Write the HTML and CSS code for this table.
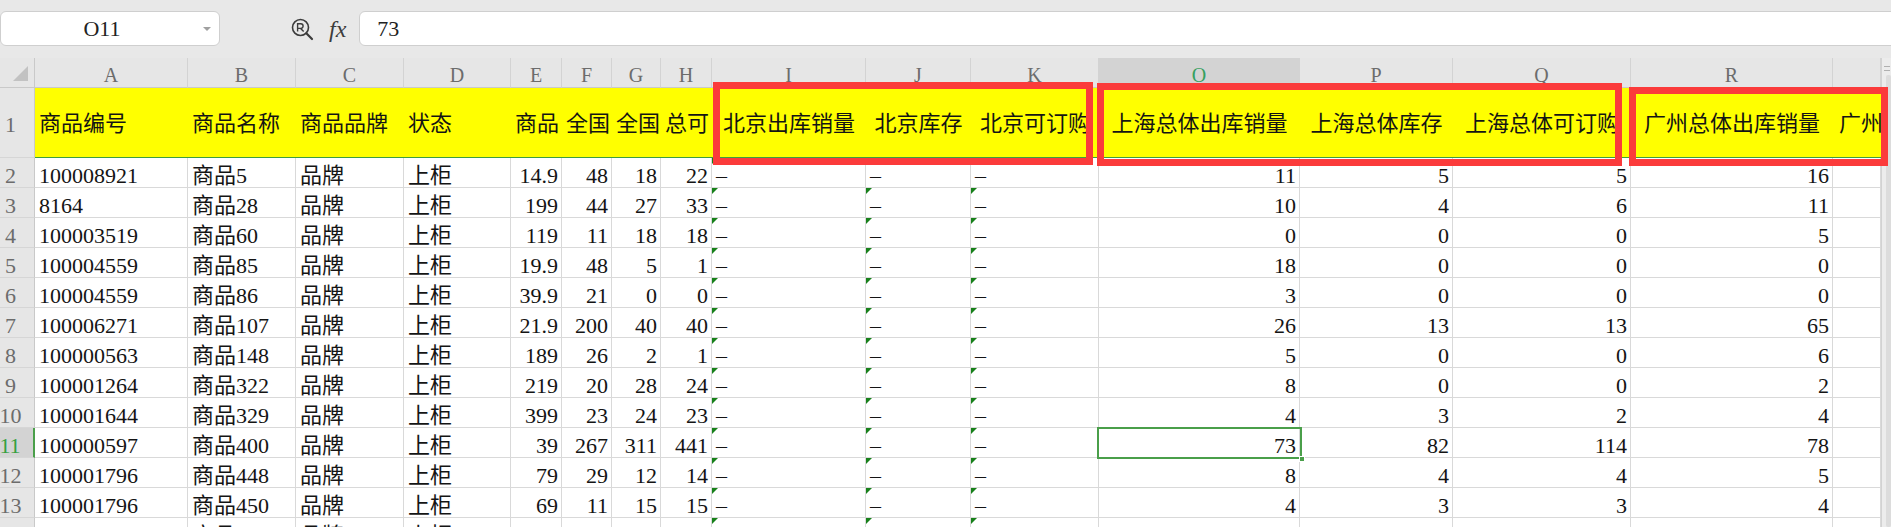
FILE: index.html
```html
<!DOCTYPE html>
<html lang="zh">
<head>
<meta charset="utf-8">
<title>Sheet</title>
<link rel="stylesheet" href="styles.css">
</head>
<body>
<div class="toolbar">
  <div class="namebox"><span class="namebox-text">O11</span><span class="dropdown"></span></div>
  <div class="tools">
    <svg class="lens" width="24" height="24" viewBox="0 0 24 24">
      <circle cx="10.5" cy="10.5" r="8" fill="none" stroke="#3c3c3c" stroke-width="1.6"/>
      <path d="M16.3 16.3 L22 22" stroke="#3c3c3c" stroke-width="2.2" stroke-linecap="round"/>
      <path d="M7.6 14.6 V6.8 H10.8 a2.3 2.3 0 0 1 0 4.6 H7.6 M10.6 11.4 L13.7 14.6" fill="none" stroke="#3c3c3c" stroke-width="1.4"/>
    </svg>
    <span class="fx">fx</span>
  </div>
  <div class="formula">73</div>
</div>
<div class="sheet">
  <div class="grid">
    <div class="corner"></div>
    <div class="ch">A</div><div class="ch">B</div><div class="ch">C</div><div class="ch">D</div><div class="ch">E</div><div class="ch">F</div><div class="ch">G</div><div class="ch">H</div><div class="ch">I</div><div class="ch">J</div><div class="ch">K</div><div class="ch sel">O</div><div class="ch">P</div><div class="ch">Q</div><div class="ch">R</div><div class="ch"></div>

    <div class="rh top">1</div>
    <div class="y">商品编号</div><div class="y">商品名称</div><div class="y">商品品牌</div><div class="y">状态</div><div class="y n">商品</div><div class="y n">全国</div><div class="y n">全国</div><div class="y n">总可</div><div class="y m">北京出库销量</div><div class="y m">北京库存</div><div class="y m">北京可订购</div><div class="y m">上海总体出库销量</div><div class="y m">上海总体库存</div><div class="y m">上海总体可订购</div><div class="y m">广州总体出库销量</div><div class="y s">广州</div>

    <div class="rh">2</div><div class="c">100008921</div><div class="c">商品5</div><div class="c">品牌</div><div class="c">上柜</div><div class="c r">14.9</div><div class="c r">48</div><div class="c r">18</div><div class="c r">22</div><div class="c e">–</div><div class="c e">–</div><div class="c e">–</div><div class="c r">11</div><div class="c r">5</div><div class="c r">5</div><div class="c r">16</div><div class="c"></div>
    <div class="rh">3</div><div class="c">8164</div><div class="c">商品28</div><div class="c">品牌</div><div class="c">上柜</div><div class="c r">199</div><div class="c r">44</div><div class="c r">27</div><div class="c r">33</div><div class="c e">–</div><div class="c e">–</div><div class="c e">–</div><div class="c r">10</div><div class="c r">4</div><div class="c r">6</div><div class="c r">11</div><div class="c"></div>
    <div class="rh">4</div><div class="c">100003519</div><div class="c">商品60</div><div class="c">品牌</div><div class="c">上柜</div><div class="c r">119</div><div class="c r">11</div><div class="c r">18</div><div class="c r">18</div><div class="c e">–</div><div class="c e">–</div><div class="c e">–</div><div class="c r">0</div><div class="c r">0</div><div class="c r">0</div><div class="c r">5</div><div class="c"></div>
    <div class="rh">5</div><div class="c">100004559</div><div class="c">商品85</div><div class="c">品牌</div><div class="c">上柜</div><div class="c r">19.9</div><div class="c r">48</div><div class="c r">5</div><div class="c r">1</div><div class="c e">–</div><div class="c e">–</div><div class="c e">–</div><div class="c r">18</div><div class="c r">0</div><div class="c r">0</div><div class="c r">0</div><div class="c"></div>
    <div class="rh">6</div><div class="c">100004559</div><div class="c">商品86</div><div class="c">品牌</div><div class="c">上柜</div><div class="c r">39.9</div><div class="c r">21</div><div class="c r">0</div><div class="c r">0</div><div class="c e">–</div><div class="c e">–</div><div class="c e">–</div><div class="c r">3</div><div class="c r">0</div><div class="c r">0</div><div class="c r">0</div><div class="c"></div>
    <div class="rh">7</div><div class="c">100006271</div><div class="c">商品107</div><div class="c">品牌</div><div class="c">上柜</div><div class="c r">21.9</div><div class="c r">200</div><div class="c r">40</div><div class="c r">40</div><div class="c e">–</div><div class="c e">–</div><div class="c e">–</div><div class="c r">26</div><div class="c r">13</div><div class="c r">13</div><div class="c r">65</div><div class="c"></div>
    <div class="rh">8</div><div class="c">100000563</div><div class="c">商品148</div><div class="c">品牌</div><div class="c">上柜</div><div class="c r">189</div><div class="c r">26</div><div class="c r">2</div><div class="c r">1</div><div class="c e">–</div><div class="c e">–</div><div class="c e">–</div><div class="c r">5</div><div class="c r">0</div><div class="c r">0</div><div class="c r">6</div><div class="c"></div>
    <div class="rh">9</div><div class="c">100001264</div><div class="c">商品322</div><div class="c">品牌</div><div class="c">上柜</div><div class="c r">219</div><div class="c r">20</div><div class="c r">28</div><div class="c r">24</div><div class="c e">–</div><div class="c e">–</div><div class="c e">–</div><div class="c r">8</div><div class="c r">0</div><div class="c r">0</div><div class="c r">2</div><div class="c"></div>
    <div class="rh">10</div><div class="c">100001644</div><div class="c">商品329</div><div class="c">品牌</div><div class="c">上柜</div><div class="c r">399</div><div class="c r">23</div><div class="c r">24</div><div class="c r">23</div><div class="c e">–</div><div class="c e">–</div><div class="c e">–</div><div class="c r">4</div><div class="c r">3</div><div class="c r">2</div><div class="c r">4</div><div class="c"></div>
    <div class="rh sel">11</div><div class="c">100000597</div><div class="c">商品400</div><div class="c">品牌</div><div class="c">上柜</div><div class="c r">39</div><div class="c r">267</div><div class="c r">311</div><div class="c r">441</div><div class="c e">–</div><div class="c e">–</div><div class="c e">–</div><div class="c r">73</div><div class="c r">82</div><div class="c r">114</div><div class="c r">78</div><div class="c"></div>
    <div class="rh">12</div><div class="c">100001796</div><div class="c">商品448</div><div class="c">品牌</div><div class="c">上柜</div><div class="c r">79</div><div class="c r">29</div><div class="c r">12</div><div class="c r">14</div><div class="c e">–</div><div class="c e">–</div><div class="c e">–</div><div class="c r">8</div><div class="c r">4</div><div class="c r">4</div><div class="c r">5</div><div class="c"></div>
    <div class="rh">13</div><div class="c">100001796</div><div class="c">商品450</div><div class="c">品牌</div><div class="c">上柜</div><div class="c r">69</div><div class="c r">11</div><div class="c r">15</div><div class="c r">15</div><div class="c e">–</div><div class="c e">–</div><div class="c e">–</div><div class="c r">4</div><div class="c r">3</div><div class="c r">3</div><div class="c r">4</div><div class="c"></div>
    <div class="rh">14</div><div class="c">100002318</div><div class="c">商品461</div><div class="c">品牌</div><div class="c">上柜</div><div class="c r">59</div><div class="c r">30</div><div class="c r">8</div><div class="c r">9</div><div class="c e">–</div><div class="c e">–</div><div class="c e">–</div><div class="c r">2</div><div class="c r">1</div><div class="c r">1</div><div class="c r">3</div><div class="c"></div>
  </div>
  <div class="vscroll"><div class="vs-grip"></div><div class="vs-thumb"></div></div>
</div>

<div class="selection"><span class="handle"></span></div>
<div class="redbox box1"></div>
<div class="redbox box2"></div>
<div class="redbox box3"></div>
</body>
</html>
```
FILE: styles.css
```css
* { box-sizing: border-box; margin: 0; padding: 0; }
html, body { width: 1891px; height: 527px; overflow: hidden; background: #fff; }
body {
  position: relative;
  font-family: "Liberation Serif", "Noto Sans CJK SC", serif;
  font-size: 22px;
  color: #141414;
}

/* ---------- formula bar ---------- */
.toolbar {
  height: 58px;
  background: #e8e8e8;
  display: flex;
  align-items: flex-start;
  padding-top: 11px;
}
.namebox {
  width: 220px;
  height: 35px;
  background: #fff;
  border: 1px solid #cfcfcf;
  border-radius: 6px;
  display: flex;
  align-items: center;
}
.namebox-text {
  width: 202px;
  text-align: center;
  line-height: 33px;
  color: #222;
}
.dropdown {
  width: 0;
  height: 0;
  border-left: 4px solid transparent;
  border-right: 4px solid transparent;
  border-top: 4px solid #a0a0a0;
}
.tools {
  display: flex;
  align-items: center;
  gap: 15px;
  height: 35px;
  margin-left: 70px;
  margin-right: 13px;
}
.lens { display: block; }
.fx {
  font-family: "Liberation Serif", serif;
  font-style: italic;
  font-size: 24px;
  color: #3c3c3c;
  line-height: 24px;
}
.formula {
  flex: 1;
  height: 35px;
  margin-right: -12px;
  background: #fff;
  border: 1px solid #cfcfcf;
  border-radius: 6px;
  padding-left: 17px;
  line-height: 33px;
  color: #222;
}

/* ---------- sheet ---------- */
.sheet {
  display: flex;
  height: 469px;
}
.grid {
  width: 1881px;
  display: grid;
  grid-template-columns: 35px 153px 108px 108px 107px 51px 50px 49px 51px 154px 105px 128px 201px 153px 178px 202px 48px;
  grid-template-rows: 30px 70px repeat(13, 30px);
  overflow: hidden;
}
.corner {
  position: relative;
  background: #e6e6e6;
  border-right: 1px solid #c9c9c9;
  border-bottom: 1px solid #c9c9c9;
}
.corner::after {
  content: "";
  position: absolute;
  right: 6px;
  bottom: 6px;
  border-left: 15px solid transparent;
  border-bottom: 15px solid #c2c2c2;
}
.ch {
  background: #e6e6e6;
  border-right: 1px solid #d3d3d3;
  border-bottom: 1px solid #c9c9c9;
  color: #6c6c6c;
  font-size: 20px;
  line-height: 22px;
  display: flex;
  align-items: flex-end;
  justify-content: center;
  padding-bottom: 1px;
}
.ch.sel {
  background: #d3d3d3;
  color: #36a060;
}
.rh {
  background: #e6e6e6;
  border-right: 1px solid #c9c9c9;
  border-bottom: 1px solid #d6d6d6;
  color: #6c6c6c;
  line-height: 22px;
  display: flex;
  align-items: flex-end;
  justify-content: center;
  padding-right: 13px;
}
.rh.top { align-items: center; padding-top: 4px; }
.rh.sel {
  background: #d3d3d3;
  color: #36a040;
  border-right: 2px solid #4a9f4a;
}

.y {
  background: #ffff00;
  border-bottom: 1px solid #3e9e3e;
  display: flex;
  align-items: center;
  padding: 3px 0 0 4px;
  white-space: nowrap;
  overflow: hidden;
  line-height: 24px;
}
.y.n { padding-left: 4px; }
.y.m { justify-content: center; padding-left: 0; }
.y.s { padding-left: 6px; }

.c {
  position: relative;
  border-right: 1px solid #d9d9d9;
  border-bottom: 1px solid #d9d9d9;
  display: flex;
  align-items: flex-end;
  padding: 0 4px;
  line-height: 22px;
  white-space: nowrap;
  overflow: hidden;
}
.c.r { justify-content: flex-end; padding-right: 3px; }
.c.e::before {
  content: "";
  position: absolute;
  top: 0;
  left: 0;
  border-top: 6px solid #17801a;
  border-right: 6px solid transparent;
}

/* ---------- scrollbar ---------- */
.vscroll {
  width: 10px;
  background: #ececec;
  border-left: 1px solid #d2d2d2;
  padding-top: 8px;
  display: flex;
  flex-direction: column;
  align-items: flex-end;
}
.vs-grip {
  width: 6px;
  height: 5px;
  margin-right: 1px;
  border-top: 1px solid #b0b0b0;
  border-bottom: 1px solid #b0b0b0;
}
.vs-thumb {
  width: 5px;
  flex: 1;
  margin-top: 4px;
  background: #dcdcdc;
  border-radius: 2px;
}

/* ---------- overlays ---------- */
.selection {
  position: absolute;
  left: 1097px;
  top: 427px;
  width: 205px;
  height: 32px;
  border: 2px solid #4a9f4a;
}
.handle {
  position: absolute;
  right: -5px;
  bottom: -5px;
  width: 6px;
  height: 6px;
  background: #4a9f4a;
  border: 1px solid #fff;
}
.redbox {
  position: absolute;
  border: 7px solid #fb3b3b;
}
.box1 { left: 713px; top: 82px; width: 380px; height: 83px; }
.box2 { left: 1097px; top: 83px; width: 525px; height: 83px; }
.box3 { left: 1629px; top: 87px; width: 259px; height: 79px; }
```
